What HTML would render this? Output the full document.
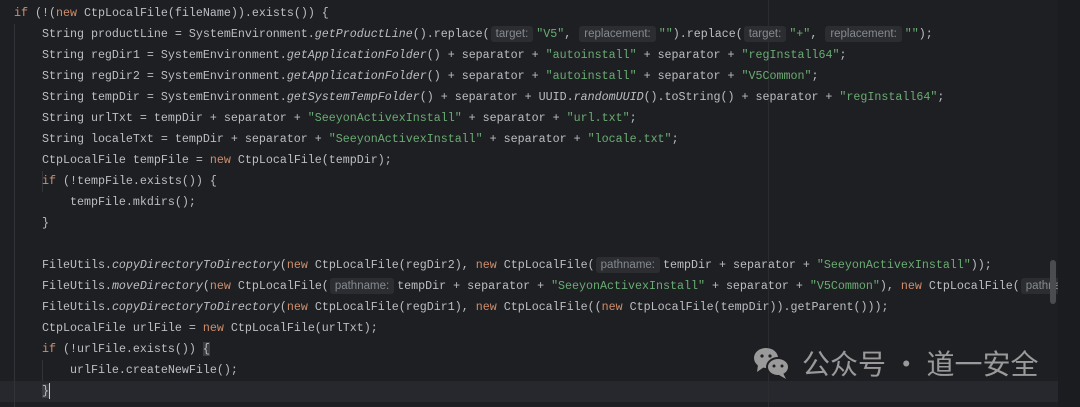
<!DOCTYPE html><html><head><style>
body{margin:0;width:1080px;height:407px;background:#1e1f22;overflow:hidden;position:relative;font-family:"Liberation Mono",monospace;font-size:11.67px;color:#bcbec4}
.l{position:absolute;left:14px;height:21px;line-height:21px;white-space:pre}
.k{color:#cf8e6d}.s{color:#6aab73}.i{font-style:italic}
.h{display:inline-block;background:#2b2d30;color:#868a91;font-family:"Liberation Sans",sans-serif;font-size:11.5px;line-height:16px;padding:0 5px;border-radius:3px;margin:0 3px 0 1px}
.g{position:absolute;width:1px;background:#313338}
</style></head><body>
<div style="position:absolute;left:0;top:381px;width:1058px;height:21px;background:#26282e"></div>
<div class="g" style="left:14px;top:24px;height:383px"></div>
<div class="g" style="left:42px;top:171px;height:21px"></div>
<div class="g" style="left:42px;top:360px;height:21px"></div>
<div class="g" style="left:768px;top:0;height:407px;background:#2a2c30"></div>
<div class="l" style="top:3px"><span class="k">if</span> (!(<span class="k">new</span> CtpLocalFile(fileName)).exists()) {</div>
<div class="l" style="top:24px">    String productLine = SystemEnvironment.<span class="i">getProductLine</span>().replace(<span class="h">target:</span><span class="s">"V5"</span>, <span class="h">replacement:</span><span class="s">""</span>).replace(<span class="h">target:</span><span class="s">"+"</span>, <span class="h">replacement:</span><span class="s">""</span>);</div>
<div class="l" style="top:45px">    String regDir1 = SystemEnvironment.<span class="i">getApplicationFolder</span>() + separator + <span class="s">"autoinstall"</span> + separator + <span class="s">"regInstall64"</span>;</div>
<div class="l" style="top:66px">    String regDir2 = SystemEnvironment.<span class="i">getApplicationFolder</span>() + separator + <span class="s">"autoinstall"</span> + separator + <span class="s">"V5Common"</span>;</div>
<div class="l" style="top:87px">    String tempDir = SystemEnvironment.<span class="i">getSystemTempFolder</span>() + separator + UUID.<span class="i">randomUUID</span>().toString() + separator + <span class="s">"regInstall64"</span>;</div>
<div class="l" style="top:108px">    String urlTxt = tempDir + separator + <span class="s">"SeeyonActivexInstall"</span> + separator + <span class="s">"url.txt"</span>;</div>
<div class="l" style="top:129px">    String localeTxt = tempDir + separator + <span class="s">"SeeyonActivexInstall"</span> + separator + <span class="s">"locale.txt"</span>;</div>
<div class="l" style="top:150px">    CtpLocalFile tempFile = <span class="k">new</span> CtpLocalFile(tempDir);</div>
<div class="l" style="top:171px">    <span class="k">if</span> (!tempFile.exists()) {</div>
<div class="l" style="top:192px">        tempFile.mkdirs();</div>
<div class="l" style="top:213px">    }</div>
<div class="l" style="top:255px">    FileUtils.<span class="i">copyDirectoryToDirectory</span>(<span class="k">new</span> CtpLocalFile(regDir2), <span class="k">new</span> CtpLocalFile(<span class="h">pathname:</span>tempDir + separator + <span class="s">"SeeyonActivexInstall"</span>));</div>
<div class="l" style="top:276px">    FileUtils.<span class="i">moveDirectory</span>(<span class="k">new</span> CtpLocalFile(<span class="h">pathname:</span>tempDir + separator + <span class="s">"SeeyonActivexInstall"</span> + separator + <span class="s">"V5Common"</span>), <span class="k">new</span> CtpLocalFile(<span class="h">pathname:</span></div>
<div class="l" style="top:297px">    FileUtils.<span class="i">copyDirectoryToDirectory</span>(<span class="k">new</span> CtpLocalFile(regDir1), <span class="k">new</span> CtpLocalFile((<span class="k">new</span> CtpLocalFile(tempDir)).getParent()));</div>
<div class="l" style="top:318px">    CtpLocalFile urlFile = <span class="k">new</span> CtpLocalFile(urlTxt);</div>
<div class="l" style="top:339px">    <span class="k">if</span> (!urlFile.exists()) <span style="background:#3b3d42">{</span></div>
<div class="l" style="top:360px">        urlFile.createNewFile();</div>
<div class="l" style="top:381px">    <span style="background:#3b3d42">}</span><span style="display:inline-block;width:1px;height:16px;background:#ced0d6;vertical-align:middle"></span></div>
<div style="position:absolute;left:1058px;top:0;width:22px;height:407px;background:#1b1c1f"></div>
<div style="position:absolute;left:1050px;top:260px;width:6px;height:44px;border-radius:3px;background:#4a4c50"></div>
<svg style="position:absolute;left:752px;top:345px" width="42" height="36" viewBox="0 0 42 36">
<ellipse cx="14" cy="13" rx="12" ry="10" fill="#9a9a9a"/><path d="M6 20 L5 27 L12 22Z" fill="#9a9a9a"/>
<ellipse cx="26" cy="22" rx="11" ry="9" fill="#9a9a9a" stroke="#1e1f22" stroke-width="2"/><path d="M31 28 L34 34 L27 30Z" fill="#9a9a9a"/>
<circle cx="10" cy="11" r="1.6" fill="#1e1f22"/><circle cx="18" cy="11" r="1.6" fill="#1e1f22"/>
<circle cx="22" cy="21" r="1.5" fill="#1e1f22"/><circle cx="30" cy="21" r="1.5" fill="#1e1f22"/></svg>
<div style="position:absolute;left:802px;top:345px;font-family:'Noto Sans CJK SC',sans-serif;font-size:28px;line-height:36px;color:#9a9a9a;white-space:nowrap">公众号 · 道一安全</div>
</body></html>
